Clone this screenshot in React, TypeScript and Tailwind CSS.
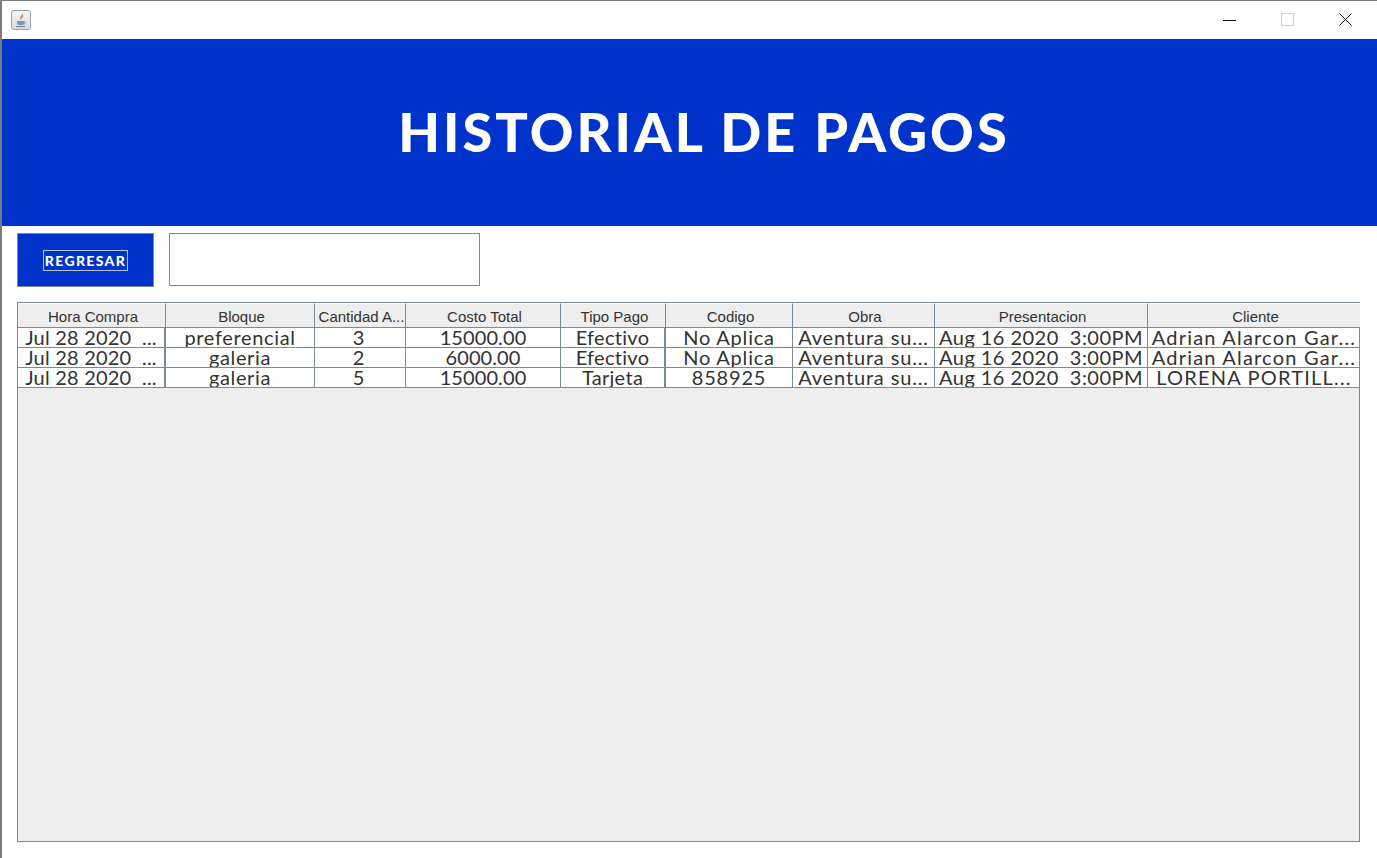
import React from "react";

const widths = ["w-[148px]", "w-[149px]", "w-[91px]", "w-[155px]", "w-[105px]", "w-[127px]", "w-[142px]", "w-[213px]", "w-[212px]"];
const tracking = ["tracking-[0.2px]", "tracking-[0.65px]", "tracking-[0px] pr-[3px]", "tracking-[0.1px]", "tracking-[0.3px]", "tracking-[0.8px]", "tracking-[0.85px]", "tracking-[0.45px]", "tracking-[1.2px]"];
const rowBorders = ["border-r-2 border-[#7a8a99]", "border-r border-[#7a8a99]", "border-r border-[#7a8a99]", "border-r border-[#7a8a99]", "border-r-2 border-[#7a8a99]", "border-r border-[#7a8a99]", "border-r border-[#7a8a99]", "border-r border-[#7a8a99]", ""];
const headers = ["Hora Compra", "Bloque", "Cantidad A...", "Costo Total", "Tipo Pago", "Codigo", "Obra", "Presentacion", "Cliente"];
const rows = [
  ["Jul 28 2020  ...", "preferencial", "3", "15000.00", "Efectivo", "No Aplica", "Aventura su...", "Aug 16 2020  3:00PM", "Adrian Alarcon Gar..."],
  ["Jul 28 2020  ...", "galeria", "2", "6000.00", "Efectivo", "No Aplica", "Aventura su...", "Aug 16 2020  3:00PM", "Adrian Alarcon Gar..."],
  ["Jul 28 2020  ...", "galeria", "5", "15000.00", "Tarjeta", "858925", "Aventura su...", "Aug 16 2020  3:00PM", "LORENA PORTILL..."],
];

function JavaIcon() {
  return (
    <div className="w-[20px] h-[20px] ml-[9px] rounded-[3px] border border-[#8ea3b5] bg-gradient-to-b from-[#f4f6f8] to-[#d5dbe0] flex items-center justify-center">
      <svg width="14" height="16" viewBox="0 0 14 16" fill="none">
        <path d="M8 1c1 2-2 3-2 5 0 1 1 2 1 2 0-2 3-2 2-5 0-1-1-2-1-2z" fill="#e8873a" />
        <path d="M3 9h7v2c0 1.500-1 2-2 2H5c-1 0-2-.5-2-2V9z" fill="#8296a8" />
        <path d="M10 9.500c2 0 2 2.500-.5 2.500" stroke="#8296a8" />
        <path d="M2 14.500h9" stroke="#6d8193" />
      </svg>
    </div>
  );
}

export default function App() {
  return (
    <div className="w-[1377px] h-[858px] bg-white overflow-hidden flex flex-col border-l-2 border-t border-[#7b7b7b]">
      <div className="h-[38px] shrink-0 flex items-center justify-between">
        <JavaIcon />
        <div className="flex items-center mr-[8px]">
          <svg width="58" height="14" viewBox="0 0 58 14"><path d="M0 7.500h13" stroke="#111" /></svg>
          <svg width="58" height="14" viewBox="0 0 58 14"><rect x="0.500" y="0.500" width="12" height="12" fill="none" stroke="#cfcfcf" /></svg>
          <svg width="30" height="14" viewBox="0 0 30 14"><path d="M0.500 0.500l12 12M12.500 0.500l-12 12" stroke="#111" /></svg>
        </div>
      </div>
      <div className="h-[187px] shrink-0 bg-[#0033cc] flex items-center justify-center">
        <h1 className="text-white font-black text-[54px] leading-none tracking-[3px] font-['Lato',sans-serif] ml-[29px] mt-[-2px]">HISTORIAL DE PAGOS</h1>
      </div>
      <div className="flex pl-[15px] pt-[7px] gap-[15px] shrink-0">
        <button className="w-[137px] h-[54px] bg-[#0033cc] border border-[#7a8a99] flex items-center justify-center">
          <span className="text-white font-black text-[14px] leading-[19px] tracking-[1.35px] px-[1px] border border-[#b8c4d8] font-['Lato',sans-serif]">REGRESAR</span>
        </button>
        <div className="w-[311px] h-[53px] bg-white border border-[#7a8a99]" />
      </div>
      <div className="ml-[15px] mt-[15px] w-[1343px] h-[540px] bg-[#eeeeee] border border-[#7a8a99] flex flex-col">
        <div className="flex h-[25px] shrink-0">
          {headers.map((h, i) => (
            <div key={h} className={`${widths[i]} shrink-0 h-full pl-[3px] text-center text-[15px] leading-[25px] text-[#333333] font-['Liberation_Sans',sans-serif] overflow-hidden whitespace-nowrap bg-[#eeeeee] ${i < 8 ? "border-r border-[#7a8a99]" : ""} border-b border-[#7a8a99] border-t border-t-white`}>
              {h}
            </div>
          ))}
        </div>
        {rows.map((r, ri) => (
          <div key={ri} className="flex h-[20px] shrink-0 bg-white border-b border-[#7a8a99]">
            {r.map((c, i) => (
              <div key={i} className={`${widths[i]} ${tracking[i]} ${rowBorders[i]} shrink-0 h-full overflow-hidden whitespace-pre text-center text-[20px] leading-[18px] text-[#333333] font-['Lato',sans-serif]`}>
                {c}
              </div>
            ))}
          </div>
        ))}
      </div>
    </div>
  );
}
